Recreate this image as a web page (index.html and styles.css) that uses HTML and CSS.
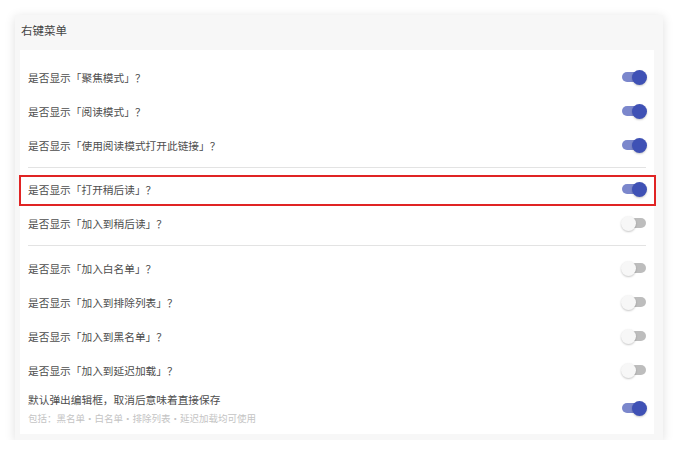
FILE: index.html
```html
<!DOCTYPE html>
<html lang="zh">
<head>
<meta charset="utf-8">
<link rel="stylesheet" href="styles.css">
</head>
<body>
<div class="card">
  <div class="card-title">右键菜单</div>
  <div class="panel">
    <div class="row"><span class="label">是否显示「聚焦模式」？</span><span class="switch on"></span></div>
    <div class="row"><span class="label">是否显示「阅读模式」？</span><span class="switch on"></span></div>
    <div class="row"><span class="label">是否显示「使用阅读模式打开此链接」？</span><span class="switch on"></span></div>
    <div class="divider"></div>
    <div class="row highlight"><span class="label">是否显示「打开稍后读」？</span><span class="switch on"></span></div>
    <div class="row"><span class="label">是否显示「加入到稍后读」？</span><span class="switch"></span></div>
    <div class="divider second"></div>
    <div class="row"><span class="label">是否显示「加入白名单」？</span><span class="switch"></span></div>
    <div class="row"><span class="label">是否显示「加入到排除列表」？</span><span class="switch"></span></div>
    <div class="row"><span class="label">是否显示「加入到黑名单」？</span><span class="switch"></span></div>
    <div class="row"><span class="label">是否显示「加入到延迟加载」？</span><span class="switch"></span></div>
    <div class="row tall">
      <div class="text">
        <div class="label">默认弹出编辑框，取消后意味着直接保存</div>
        <div class="hint">包括：黑名单・白名单・排除列表・延迟加载均可使用</div>
      </div>
      <span class="switch on"></span>
    </div>
  </div>
</div>
</body>
</html>
```

FILE: styles.css
```css
* { box-sizing: border-box; }
html, body { margin: 0; padding: 0; background: #ffffff; }
body {
  font-family: "Noto Sans CJK SC", "Noto Sans", sans-serif;
  padding: 15px 0 0 15px;
}
.card {
  width: 648px;
  height: 425px;
  background: #f7f7f7;
  box-shadow: 0 2px 10px rgba(0,0,0,0.13);
  padding: 0 9px 0 5px;
  display: flex;
  flex-direction: column;
}
.card-title {
  height: 35px;
  line-height: 30px;
  font-size: 11.5px;
  color: #444;
  padding-left: 1px;
}
.panel {
  background: #ffffff;
  height: 384px;
  padding: 10px 8px 0 8px;
  display: flex;
  flex-direction: column;
}
.row {
  height: 34px;
  display: flex;
  align-items: center;
  justify-content: space-between;
  position: relative;
}
.label {
  font-size: 10.7px;
  color: #4d4d4d;
}
.divider {
  height: 1px;
  background: #e3e3e3;
  margin: 5px 0 4px;
}
.divider.second { margin: 5px 0 5px; }
.highlight::after {
  content: "";
  position: absolute;
  top: 3px;
  bottom: 0;
  left: -9px;
  right: -10px;
  border: 2.5px solid #e02424;
  pointer-events: none;
}
.row.tall {
  height: 42px;
}
.text { display: flex; flex-direction: column; gap: 4px; }
.hint { font-size: 9.5px; color: #c4c4c4; }
.switch {
  position: relative;
  width: 26px;
  height: 15px;
  flex: none;
  margin-right: -1px;
}
.switch::before {
  content: "";
  position: absolute;
  left: 1px;
  right: 1px;
  top: 2.5px;
  height: 10px;
  border-radius: 5px;
  background: #bdbdbd;
}
.switch::after {
  content: "";
  position: absolute;
  left: 0;
  top: 0;
  width: 15px;
  height: 15px;
  border-radius: 50%;
  background: #f7f7f7;
  box-shadow: 0 1px 2px rgba(0,0,0,0.22);
}
.switch.on::before { background: #7b87cc; }
.switch.on::after {
  left: 11px;
  background: #3f51b5;
}
```
